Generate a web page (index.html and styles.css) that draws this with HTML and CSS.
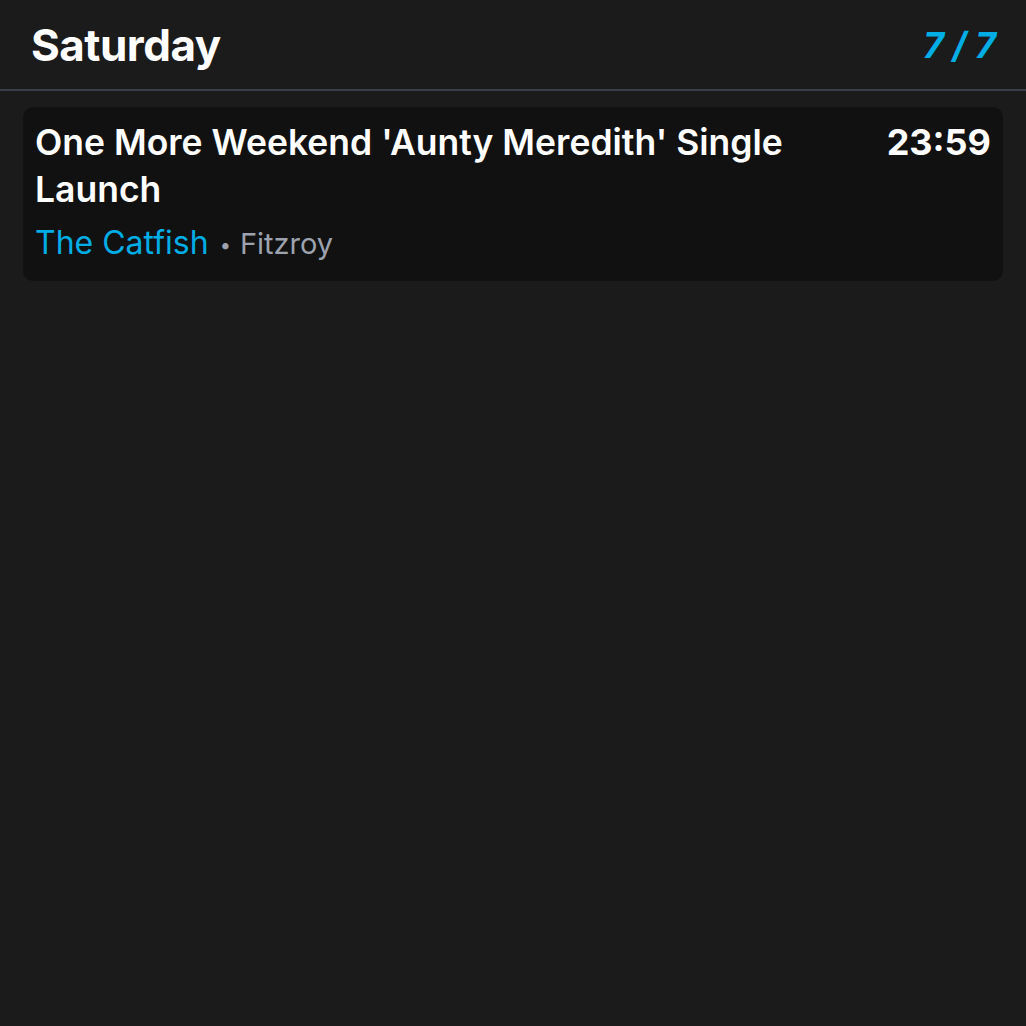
FILE: index.html
```html
<!DOCTYPE html>
<html>
<head>
<meta charset="utf-8">
<link rel="stylesheet" href="styles.css">
</head>
<body>
<header class="header">
  <h1 class="day">Saturday</h1>
  <div class="count">7 / 7</div>
</header>
<main class="list">
  <article class="card">
    <div class="card-main">
      <div class="title">One More Weekend 'Aunty Meredith' Single Launch</div>
      <div class="meta"><span class="venue">The Catfish</span><span class="dot">•</span><span class="suburb">Fitzroy</span></div>
    </div>
    <div class="time">23:59</div>
  </article>
</main>
</body>
</html>
```
FILE: styles.css
```css
html, body {
  margin: 0;
  padding: 0;
  background: #1b1b1b;
  font-family: Inter, "Noto Sans", sans-serif;
  color: #fff;
}
.header {
  display: flex;
  justify-content: space-between;
  align-items: center;
  height: 89px;
  padding: 0 30px 0 31px;
  border-bottom: 2px solid #3a3f4a;
}
.day {
  margin: 0;
  font-size: 44px;
  font-weight: 700;
  letter-spacing: -0.5px;
  line-height: 1;
}
.count {
  font-size: 36px;
  font-weight: 700;
  color: #00ade4;
  font-style: italic;
  line-height: 1;
}
.list {
  padding: 16px 23px;
}
.card {
  display: flex;
  justify-content: space-between;
  align-items: flex-start;
  background: #111111;
  border-radius: 10px;
  padding: 12px 12px 16px 12px;
}
.card-main {
  flex: 1;
  min-width: 0;
}
.title {
  font-size: 35.5px;
  font-weight: 600;
  line-height: 47px;
  padding-right: 60px;
}
.meta {
  margin-top: 10px;
  font-size: 32px;
  line-height: 40px;
}
.venue {
  color: #00ade4;
}
.dot {
  color: #9ca3af;
  font-size: 20px;
  margin: 0 9px 0 11px;
  vertical-align: middle;
}
.suburb {
  color: #9ca3af;
  font-size: 29px;
}
.time {
  font-size: 36px;
  font-weight: 700;
  line-height: 47px;
}
```
